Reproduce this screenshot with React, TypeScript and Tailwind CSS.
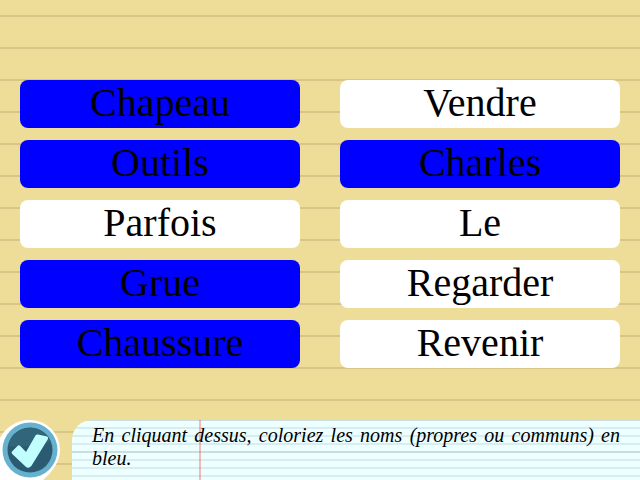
import { useState } from "react";

type Word = { text: string; noun: boolean };

const words: Word[] = [
  { text: "Chapeau", noun: true },
  { text: "Vendre", noun: false },
  { text: "Outils", noun: true },
  { text: "Charles", noun: true },
  { text: "Parfois", noun: false },
  { text: "Le", noun: false },
  { text: "Grue", noun: true },
  { text: "Regarder", noun: false },
  { text: "Chaussure", noun: true },
  { text: "Revenir", noun: false },
];

function WordButton({ word }: { word: Word }) {
  const [colored, setColored] = useState(word.noun);
  return (
    <button
      type="button"
      aria-pressed={colored}
      onClick={() => setColored(!colored)}
      className={`h-12 rounded-lg pb-0.5 text-center text-[40px] leading-[46px] text-black ${
        colored ? "bg-[#0000ff]" : "bg-white"
      }`}
    >
      {word.text}
    </button>
  );
}

function CheckBadge() {
  return (
    <svg viewBox="0 0 60 60" className="block size-15" aria-hidden="true">
      <path d="M0 18A33 33 0 0 1 30 0A30 30 0 0 1 60 30Q60 45 43 60H0Z" fill="#fff" />
      <circle cx="30" cy="30" r="27.5" fill="#66b1ce" />
      <circle cx="30" cy="30" r="22.5" fill="#2a5b70" />
      <path d="M8 26A22.500 22.500 0 0 1 51 22Q30 28 8 26Z" fill="#30657a" />
      <path
        d="M12 31.500L18 25.500Q19 24.800 20 25.800L26 32L35.500 15.500Q36.300 14.300 38 14.600L47 16.500Q48.800 17.200 47.800 19.200L31.500 45.800Q28.500 49.500 25.500 46.500L12 33.800Q11.200 32.600 12 31.500Z"
        fill="#c1ffff"
      />
    </svg>
  );
}

export default function App() {
  return (
    <div className="flex h-screen flex-col justify-between overflow-hidden bg-[#eedd99] bg-[linear-gradient(transparent_15px,#d6c587_15px,#d6c587_17px,transparent_17px)] bg-size-[100%_32px] font-['Liberation_Serif',serif] text-black">
      <main className="grid grid-cols-2 gap-x-10 gap-y-3 px-5 pt-20">
        {words.map((word) => (
          <WordButton key={word.text} word={word} />
        ))}
      </main>
      <footer className="flex gap-3">
        <button type="button" aria-label="Valider" className="size-15 shrink-0">
          <CheckBadge />
        </button>
        <p className="h-15 grow rounded-tl-[20px] bg-[#eeffff] bg-[linear-gradient(90deg,transparent_127px,#ff000044_127px,#ff000044_129px,transparent_129px),linear-gradient(#ccdddd_1px,transparent_1px,transparent_31px,#ccdddd_31px),linear-gradient(#d8edf1_1px,transparent_1px,transparent_7px,#d8edf1_7px)] bg-size-[100%_100%,100%_32px,100%_8px] px-5 pt-1 text-justify text-xl leading-[23px] italic">
          En cliquant dessus, coloriez les noms (propres ou communs) en bleu.
        </p>
      </footer>
    </div>
  );
}
